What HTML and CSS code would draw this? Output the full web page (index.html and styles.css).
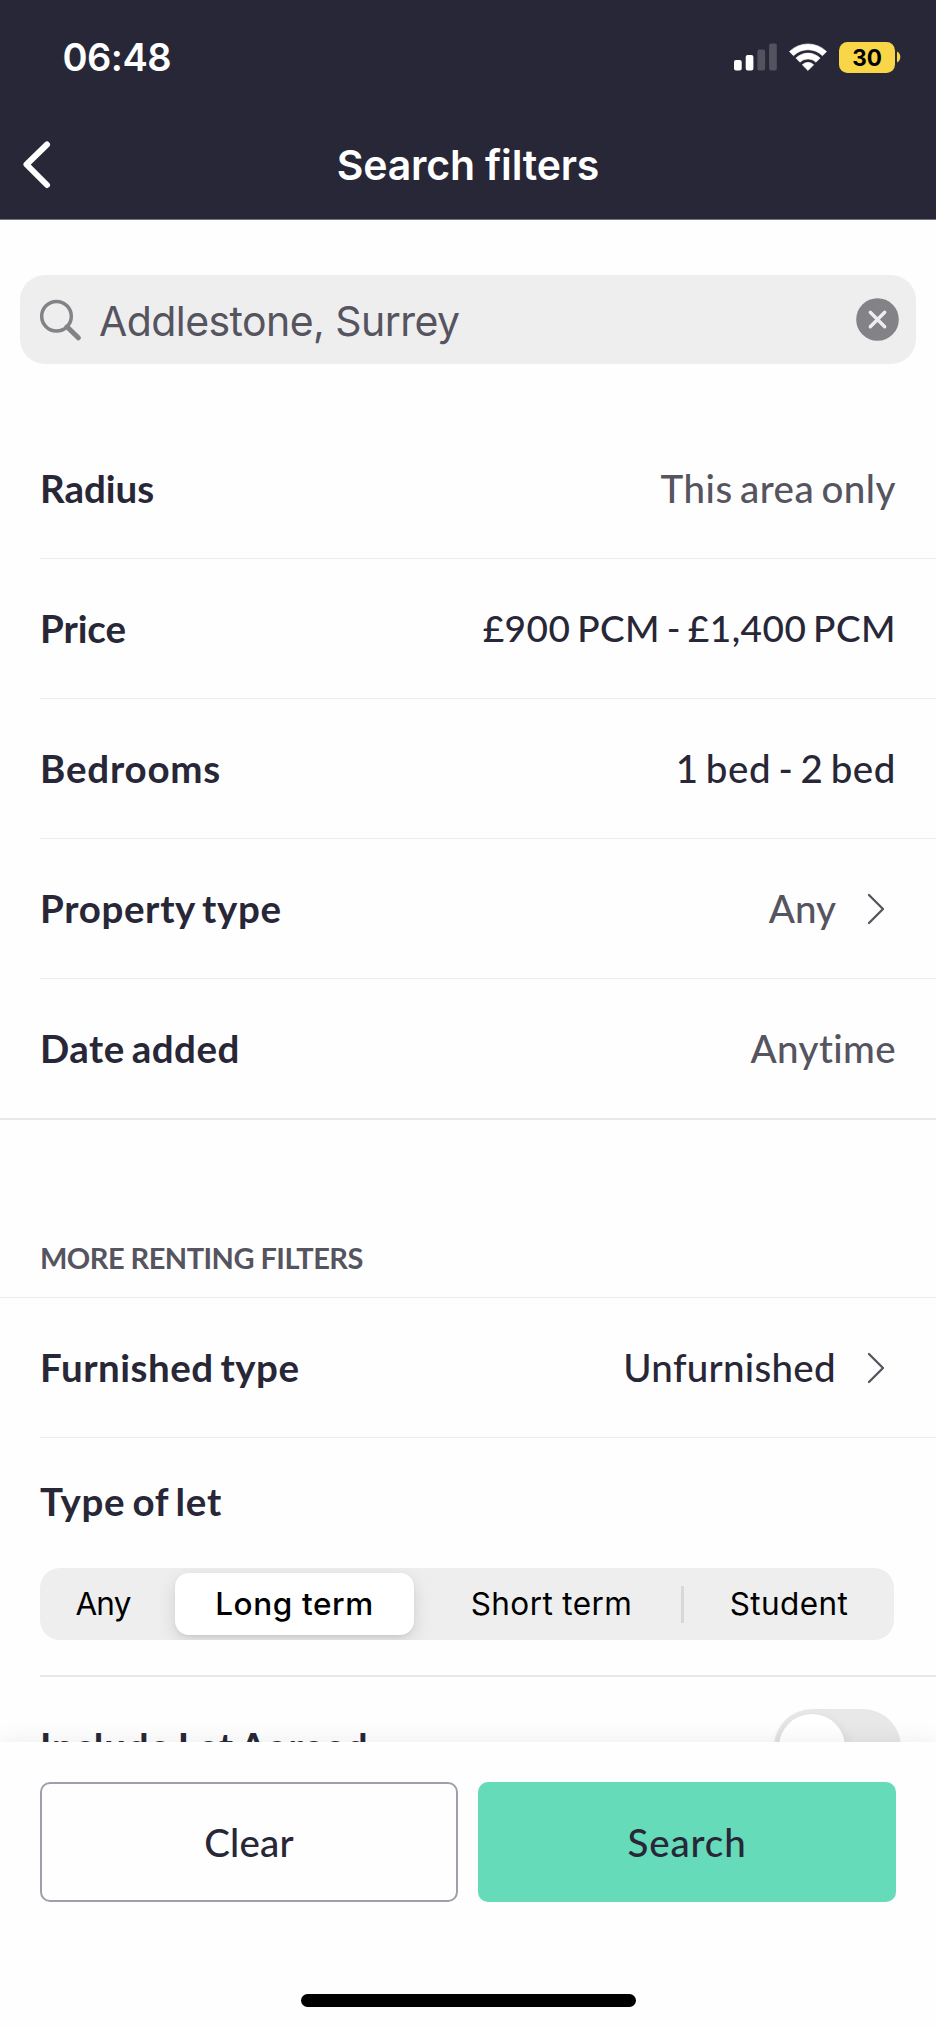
FILE: index.html
```html
<!DOCTYPE html>
<html lang="en">
<head>
<meta charset="utf-8">
<title>Search filters</title>
<link rel="stylesheet" href="styles.css">
</head>
<body>
<div class="screen">
  <header class="header">
    <div class="status">
      <span class="time">06:48</span>
      <div class="indicators">
        <svg class="signal" width="43" height="28" viewBox="0 0 43 28">
          <rect x="0" y="17" width="7.7" height="10.5" rx="2" fill="#fff"/>
          <rect x="11.7" y="12" width="7.7" height="15.5" rx="2" fill="#fff"/>
          <rect x="23.4" y="6.5" width="7.7" height="21" rx="2" fill="#53525e"/>
          <rect x="35.1" y="0.5" width="7.7" height="27" rx="2" fill="#53525e"/>
        </svg>
        <svg class="wifi" width="38" height="28" viewBox="0 0 38 28">
          <path d="M0.4 8.6A26.4 26.4 0 0 1 37.6 8.6L33.5 12.7A20.6 20.6 0 0 0 4.5 12.7Z" fill="#fff" stroke="#fff" stroke-width=".6" stroke-linejoin="round"/>
          <path d="M6.9 15.1A17.2 17.2 0 0 1 31.1 15.1L27 19.2A11.4 11.4 0 0 0 11 19.2Z" fill="#fff" stroke="#fff" stroke-width=".6" stroke-linejoin="round"/>
          <path d="M13.4 21.8A7.9 7.9 0 0 1 24.6 21.8L19 27.4Z" fill="#fff" stroke="#fff" stroke-width=".8" stroke-linejoin="round"/>
        </svg>
        <div class="battery">
          <span class="level">30</span>
          <svg width="5" height="12" viewBox="0 0 5 12"><path d="M1 0.5C5.4 2.2 5.4 9.8 1 11.5Z" fill="#f8d648"/></svg>
        </div>
      </div>
    </div>
    <div class="nav">
      <svg class="back" width="32" height="50" viewBox="0 0 32 50"><path d="M26 4.5L5.5 24.5L26 45" fill="none" stroke="#fff" stroke-width="6" stroke-linecap="round" stroke-linejoin="round"/></svg>
      <h1 class="title">Search filters</h1>
    </div>
  </header>

  <main class="content">
    <div class="search">
      <svg class="glass" width="44" height="44" viewBox="0 0 44 44"><circle cx="19.5" cy="18.2" r="14.8" fill="none" stroke="#838286" stroke-width="3.5"/><path d="M30 28.8L41.3 39.8" stroke="#838286" stroke-width="5" stroke-linecap="round"/></svg>
      <span class="query">Addlestone, Surrey</span>
      <svg class="clear" width="43" height="43" viewBox="0 0 43 43"><circle cx="21.5" cy="21.5" r="21.3" fill="#838287"/><path d="M14.3 14.3L28.7 28.7M28.7 14.3L14.3 28.7" stroke="#eee" stroke-width="3.4" stroke-linecap="round"/></svg>
    </div>

    <section class="group">
      <div class="row"><span class="label t-radius">Radius</span><span class="value muted t-area">This area only</span></div>
      <div class="row"><span class="label t-price">Price</span><span class="value t-range">£900 PCM - £1,400 PCM</span></div>
      <div class="row"><span class="label t-beds">Bedrooms</span><span class="value t-bed">1 bed - 2 bed</span></div>
      <div class="row"><span class="label t-property">Property type</span><span class="value muted">Any</span><svg class="chevron" width="18" height="32" viewBox="0 0 18 32"><path d="M2 2L16 16L2 30" fill="none" stroke="#55545f" stroke-width="2.3" stroke-linecap="round" stroke-linejoin="round"/></svg></div>
      <div class="row row-last"><span class="label t-date">Date added</span><span class="value muted t-anytime">Anytime</span></div>
    </section>

    <h2 class="heading">MORE RENTING FILTERS</h2>

    <section class="group">
      <div class="row"><span class="label t-date">Furnished type</span><span class="value t-unf">Unfurnished</span><svg class="chevron" width="18" height="32" viewBox="0 0 18 32"><path d="M2 2L16 16L2 30" fill="none" stroke="#55545f" stroke-width="2.3" stroke-linecap="round" stroke-linejoin="round"/></svg></div>
      <div class="let">
        <span class="label t-let">Type of let</span>
        <div class="segments">
          <span class="segment seg-any">Any</span>
          <span class="segment selected">Long term</span>
          <span class="segment seg-short">Short term</span>
          <span class="segment">Student</span>
        </div>
      </div>
      <div class="row"><span class="label t-include">Include Let Agreed</span><span class="toggle"><span class="knob"></span></span></div>
    </section>
  </main>

  <footer class="footer">
    <div class="actions">
      <button class="button outline">Clear</button>
      <button class="button primary">Search</button>
    </div>
    <div class="home"></div>
  </footer>
</div>
</body>
</html>
```
FILE: styles.css
```css
* { box-sizing: border-box; }
body { margin: 0; background: #fefefe; }
.screen {
  width: 936px; height: 2027px; overflow: hidden;
  display: flex; flex-direction: column;
  font-family: Lato, "Noto Sans", sans-serif; color: #282737;
}
h1, h2 { margin: 0; }
svg { display: block; flex: none; }

.header {
  flex: none; height: 220px; background: #282737; color: #fff;
  border-bottom: 1px solid #75747f; font-family: Inter, sans-serif;
}
.status {
  height: 114px; padding: 0 35px 0 62.5px;
  display: flex; align-items: center; justify-content: space-between;
}
.time { font-size: 38px; line-height: 46px; font-weight: 600; letter-spacing: -.5px; }
.indicators { display: flex; align-items: center; }
.wifi { margin-left: 12.5px; }
.battery { margin-left: 12px; display: flex; align-items: center; gap: 1px; }
.level {
  width: 56px; height: 31px; border-radius: 8.5px; background: #f8d648; color: #000;
  font-size: 22.5px; line-height: 31px; font-weight: 700; text-align: center;
}
.nav {
  height: 102px; padding: 0 21px;
  display: grid; grid-template-columns: 32px 1fr 32px; align-items: center;
}
.title { font-size: 41px; line-height: 50px; font-weight: 600; letter-spacing: -.18px; text-align: center; }

.content { flex: 1; min-height: 0; overflow: hidden; }
.search {
  height: 89px; margin: 55px 20px; padding: 0 17px; border-radius: 25px;
  background: #eee; display: flex; align-items: center;
}
.query {
  flex: 1; margin-left: 18px; padding-top: 2px;
  font: 400 41px/50px Inter, sans-serif; letter-spacing: -.56px; color: #55545f;
}

.row {
  height: 140px; margin-left: 40px; padding-right: 40px;
  border-bottom: 1px solid #ebebeb; display: flex; align-items: center;
}
.row-last {
  height: 141px; margin-left: 0; padding-left: 40px;
  border-bottom: 2px solid #e8e8e9;
}
.label, .value { font-size: 38.5px; line-height: 44px; padding-bottom: 2px; white-space: nowrap; word-spacing: -3px; }
.label { font-weight: 700; }
.value { margin-left: auto; font-weight: 500; }
.muted { color: #55545f; }
.chevron { margin: 0 11px 0 31px; }

/* tracking for the individual captions */
.t-radius { letter-spacing: 0; }
.t-price { letter-spacing: -.1px; }
.t-beds { letter-spacing: .8px; }
.t-property { letter-spacing: .65px; }
.t-date { letter-spacing: .5px; }
.t-let { letter-spacing: .7px; }
.t-include { letter-spacing: .8px; }
.t-area { letter-spacing: .5px; }
.t-range { font-size: 37px; letter-spacing: .45px; }
.t-bed { letter-spacing: .55px; }
.t-anytime { letter-spacing: .4px; }
.t-unf { letter-spacing: .3px; }

.heading {
  height: 178px; padding: 120px 40px 0; border-bottom: 1px solid #ebebeb;
  font-size: 29px; line-height: 35px; font-weight: 700; letter-spacing: -.53px; color: #55545f;
}
.let { margin-left: 40px; padding: 41px 0 35px; border-bottom: 2px solid #e8e8e9; display: flex; flex-direction: column; }
.segments {
  width: 854px; height: 72px; margin-top: 43px; border-radius: 20px;
  background: #eee; overflow: hidden;
  display: grid; grid-template-columns: 135px 239px 270px 1fr; align-items: center;
}
.segment {
  font: 400 31.5px/62px Inter, sans-serif; color: #000; letter-spacing: .4px;
  height: 62px; text-align: center;
}
.seg-any { padding-right: 9px; letter-spacing: -.8px; }
.selected {
  background: #fff; border-radius: 14px; font-weight: 500; letter-spacing: .6px;
  box-shadow: 0 6px 18px rgba(0,0,0,.13), 0 2px 3px rgba(0,0,0,.05);
}
.seg-short {
  padding-left: 5px;
  background: linear-gradient(#d8d8d8, #d8d8d8) right center / 3px 37px no-repeat;
}
.toggle {
  width: 127px; height: 76px; margin: 0 -5px 0 auto; padding: 5px;
  border-radius: 38px; background: #e8e8e8;
}
.knob {
  display: block; width: 66px; height: 66px; border-radius: 50%;
  background: #fff; box-shadow: 0 6px 14px rgba(0,0,0,.12);
}

.footer {
  position: relative; flex: none; height: 285px; padding: 40px 40px 20px;
  background: #fefefe; box-shadow: 0 0 22px rgba(0,0,0,.075);
  display: flex; flex-direction: column; justify-content: space-between; align-items: center;
}
.actions { width: 856px; display: grid; grid-template-columns: 418px 418px; gap: 20px; }
.button {
  height: 120px; padding: 0 0 1px; border: 0; border-radius: 10px;
  font: 500 38.5px/46px Lato, sans-serif; color: #282737;
}
.outline { background: #fefefe; border: 2px solid #a09eab; letter-spacing: .2px; }
.primary { background: #65dbb9; letter-spacing: .9px; }
.home { width: 335px; height: 13px; border-radius: 6.5px; background: #000; }
```
